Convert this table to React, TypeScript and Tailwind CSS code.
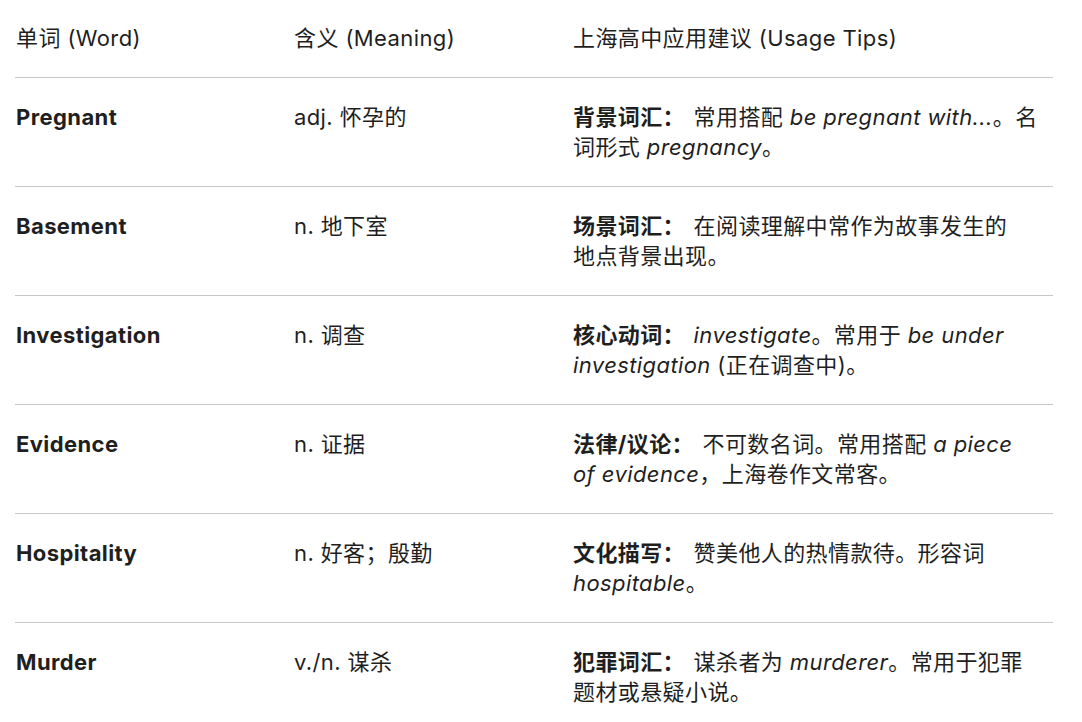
import React from "react";

type Row = {
  word: string;
  meaning: string;
  label: string;
  lines: [React.ReactNode, React.ReactNode];
};

const ROWS: Row[] = [
  {
    word: "Pregnant",
    meaning: "adj. 怀孕的",
    label: "背景词汇：",
    lines: [
      <>
        常用搭配 <i>be pregnant with...</i>。名
      </>,
      <>
        词形式 <i>pregnancy</i>。
      </>,
    ],
  },
  {
    word: "Basement",
    meaning: "n. 地下室",
    label: "场景词汇：",
    lines: [<>在阅读理解中常作为故事发生的</>, <>地点背景出现。</>],
  },
  {
    word: "Investigation",
    meaning: "n. 调查",
    label: "核心动词：",
    lines: [
      <>
        <i>investigate</i>。常用于 <i>be under</i>
      </>,
      <>
        <i>investigation</i> (正在调查中)。
      </>,
    ],
  },
  {
    word: "Evidence",
    meaning: "n. 证据",
    label: "法律/议论：",
    lines: [
      <>
        不可数名词。常用搭配 <i>a piece</i>
      </>,
      <>
        <i>of evidence</i>，上海卷作文常客。
      </>,
    ],
  },
  {
    word: "Hospitality",
    meaning: "n. 好客；殷勤",
    label: "文化描写：",
    lines: [
      <>赞美他人的热情款待。形容词</>,
      <>
        <i>hospitable</i>。
      </>,
    ],
  },
  {
    word: "Murder",
    meaning: "v./n. 谋杀",
    label: "犯罪词汇：",
    lines: [
      <>
        谋杀者为 <i>murderer</i>。常用于犯罪
      </>,
      <>题材或悬疑小说。</>,
    ],
  },
];

export default function App() {
  return (
    <main
      className="min-h-screen bg-white text-[#1f1f1f] text-[22px] leading-[30px] tracking-[0.4px]"
      style={{ fontFamily: 'Inter, "Noto Sans CJK SC", sans-serif' }}
    >
      <div className="w-[1038px] ml-[15px]">
        {/* header */}
        <div className="grid grid-cols-[278px_279px_1fr] pt-[23px] pb-[24px] pl-px">
          <div>单词 (Word)</div>
          <div>含义 (Meaning)</div>
          <div>上海高中应用建议 (Usage Tips)</div>
        </div>

        {ROWS.map((r) => (
          <div
            key={r.word}
            className="grid grid-cols-[278px_279px_1fr] border-t border-[#c7c7c7] pt-[24px] pb-[24px] pl-px"
          >
            <div className="font-bold">{r.word}</div>
            <div>{r.meaning}</div>
            <div className="whitespace-nowrap">
              <span className="font-bold mr-[2px]">{r.label}</span> {r.lines[0]}
              <br />
              {r.lines[1]}
            </div>
          </div>
        ))}
      </div>
    </main>
  );
}
